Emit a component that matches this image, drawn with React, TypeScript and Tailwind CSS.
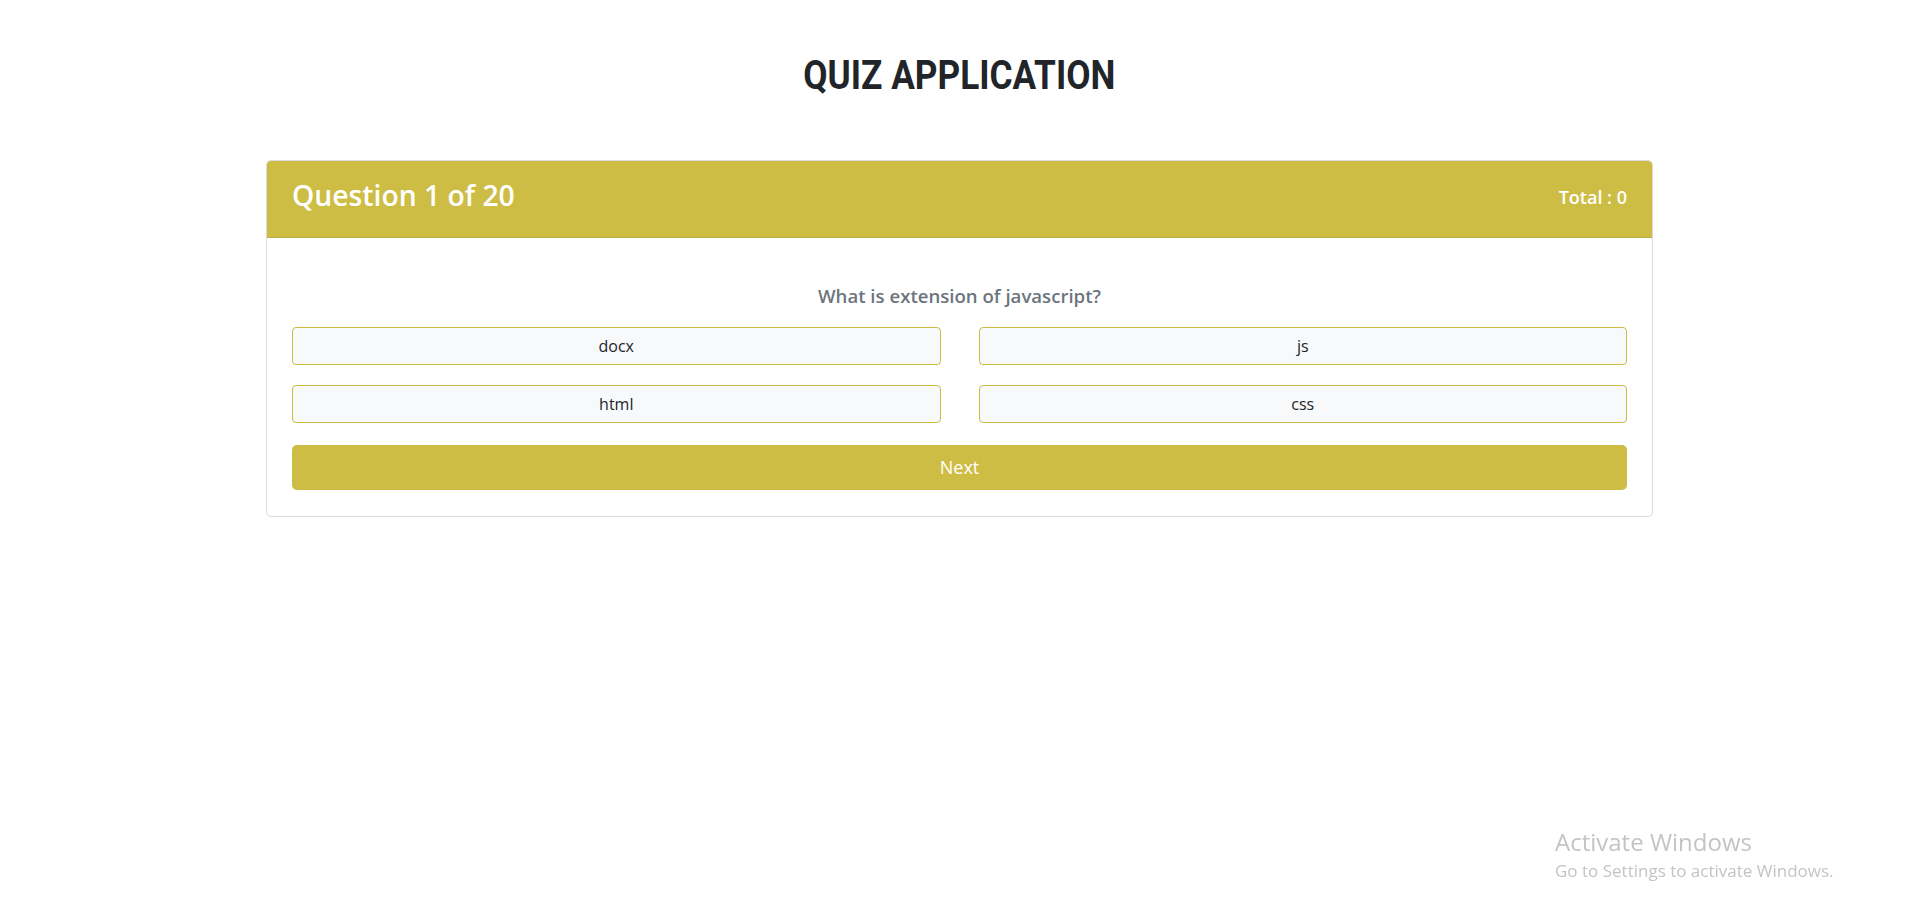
import React from 'react';

const options = ['docx', 'js', 'html', 'css'];

const App = () => {
    return (
        <div className="min-h-screen bg-white font-['Open_Sans',sans-serif]">
            <h1 className="pt-[52px] text-center font-['Roboto',sans-serif] text-[40px] font-bold leading-[48px] text-[#212529]">
                <span className="inline-block scale-x-[0.88]">QUIZ APPLICATION</span>
            </h1>

            <div className="mx-auto mt-[60px] w-[1387px] rounded-[5px] border border-[#dcdcdc]">
                {/* header */}
                <div className="flex h-[77px] items-center justify-between rounded-t-[4px] border-b border-[#bfae3f] bg-[#cebd45] px-[25px] text-white">
                    <h3 className="mb-[8px] text-[28.3px] font-semibold leading-[34px]">Question 1 of 20</h3>
                    <span className="mb-[4px] text-[18px] font-semibold">Total : 0</span>
                </div>

                {/* body */}
                <div className="px-[25px] pb-[26px] pt-[44px]">
                    <p className="text-center text-[18.6px] font-semibold leading-[28px] text-[#6c757d]">
                        What is extension of javascript?
                    </p>

                    <div className="mt-[17px] grid grid-cols-2 gap-x-[38px] gap-y-[20px]">
                        {options.map((opt) => (
                            <button
                                key={opt}
                                className="flex h-[38px] items-center justify-center rounded-[4px] border border-[#cebd45] bg-[#f8f9fa] text-[16px] text-[#212529]"
                            >
                                {opt}
                            </button>
                        ))}
                    </div>

                    <button className="mt-[22px] flex h-[45px] w-full items-center justify-center rounded-[5px] bg-[#cebd45] text-[18px] text-white">
                        Next
                    </button>
                </div>
            </div>

            <div className="fixed left-[1555px] top-[828px] font-['Open_Sans',sans-serif] text-[#c4c4c4]">
                <p className="text-[24px] leading-[28px]">Activate Windows</p>
                <p className="mt-[4px] text-[17px] leading-[22px]">Go to Settings to activate Windows.</p>
            </div>
        </div>
    );
};

export default App;
